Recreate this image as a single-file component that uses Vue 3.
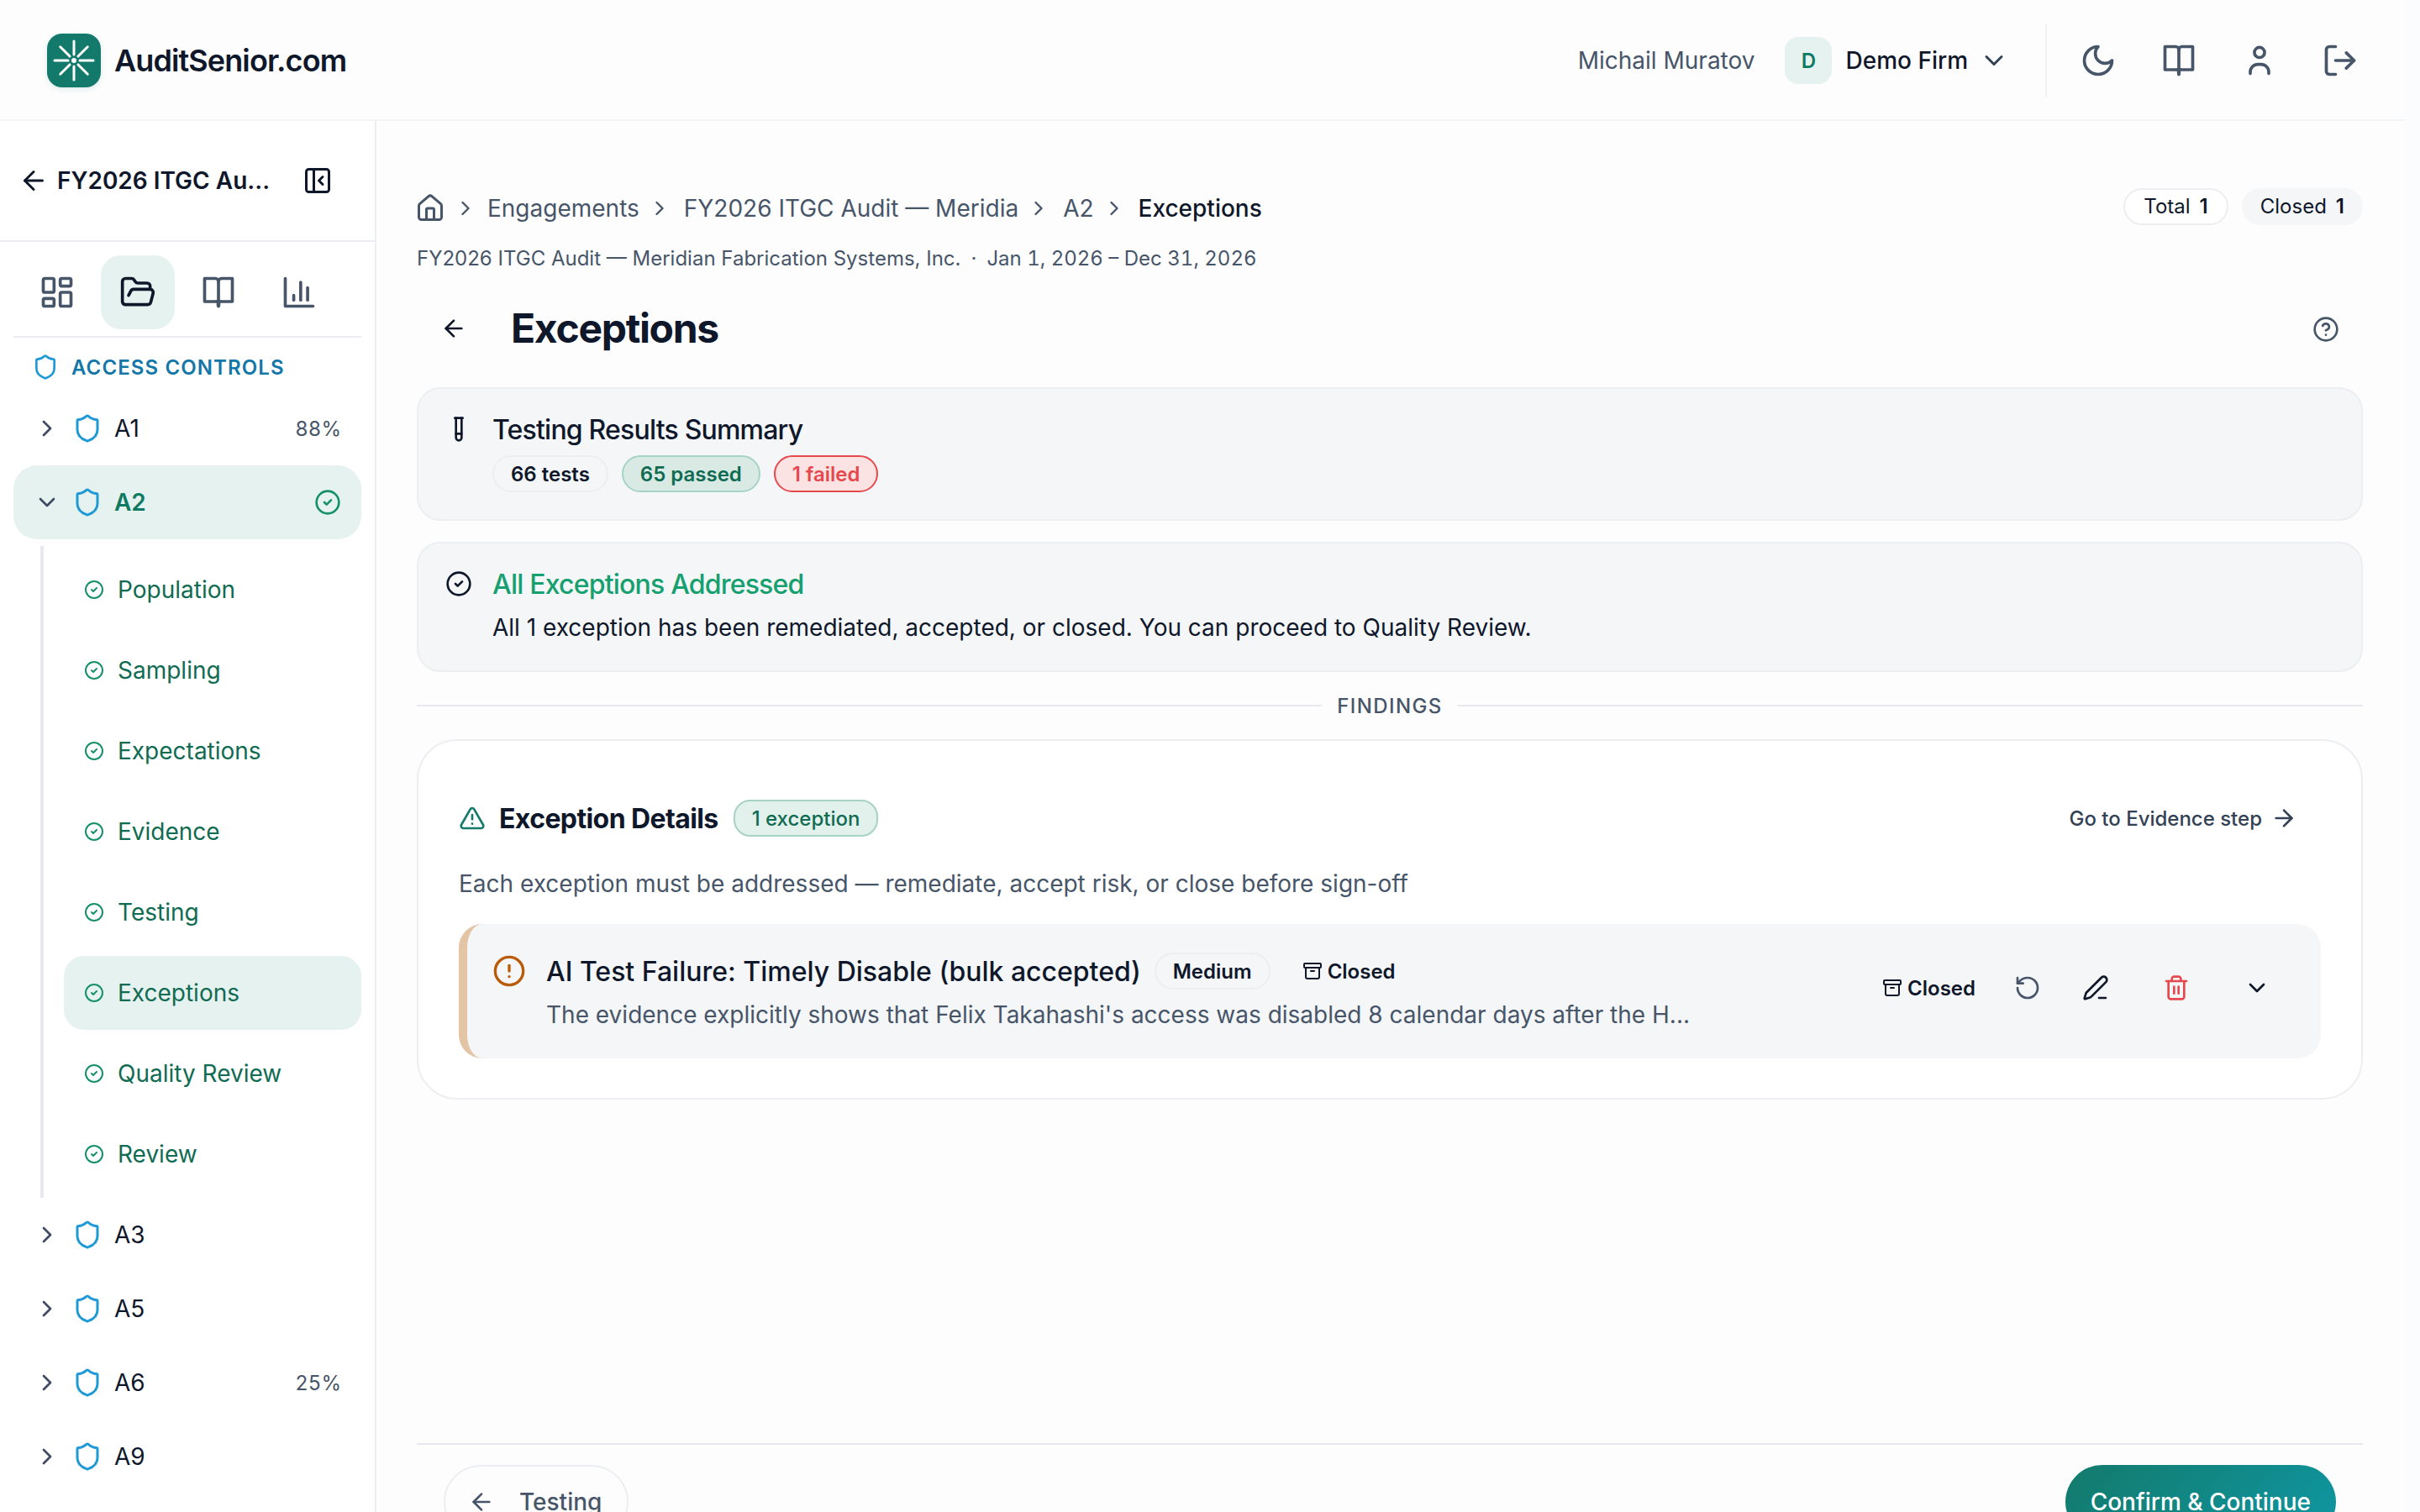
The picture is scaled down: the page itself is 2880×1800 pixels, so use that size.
<script setup>
import { h } from 'vue'

const icons = {
  arrowLeft: '<path d="m12 19-7-7 7-7"/><path d="M19 12H5"/>',
  arrowRight: '<path d="M5 12h14"/><path d="m12 5 7 7-7 7"/>',
  panel: '<rect x="3" y="3" width="18" height="18" rx="2"/><path d="M9 3v18"/><path d="m16 15-3-3 3-3"/>',
  dash: '<rect x="3" y="3" width="7" height="9" rx="1"/><rect x="14" y="3" width="7" height="5" rx="1"/><rect x="14" y="12" width="7" height="9" rx="1"/><rect x="3" y="16" width="7" height="5" rx="1"/>',
  folder: '<path d="m6 14 1.5-2.9A2 2 0 0 1 9.24 10H20a2 2 0 0 1 1.94 2.5l-1.54 6a2 2 0 0 1-1.95 1.5H4a2 2 0 0 1-2-2V5a2 2 0 0 1 2-2h3.9a2 2 0 0 1 1.69.9l.81 1.2a2 2 0 0 0 1.67.9H18a2 2 0 0 1 2 2v2"/>',
  book: '<path d="M12 5v16"/><path d="M3 3h7a2 2 0 0 1 2 2 2 2 0 0 1 2-2h7v15h-7a2 2 0 0 0-2 3 2 2 0 0 0-2-3H3z"/>',
  chart: '<path d="M3 3v18h18"/><path d="M17.5 17V9"/><path d="M13 17V5.5"/><path d="M8.5 17v-3"/>',
  shield: '<path d="M20 13c0 5-3.5 7.5-7.66 8.95a1 1 0 0 1-.67-.01C7.5 20.5 4 18 4 13V6a1 1 0 0 1 1-1c2 0 4.5-1.2 6.24-2.72a1.17 1.17 0 0 1 1.52 0C14.51 3.81 17 5 19 5a1 1 0 0 1 1 1z"/>',
  check: '<circle cx="12" cy="12" r="10"/><path d="m9 12 2 2 4-4"/>',
  right: '<path d="m9 18 6-6-6-6"/>',
  down: '<path d="m6 9 6 6 6-6"/>',
  moon: '<path d="M12 3a6 6 0 0 0 9 9 9 9 0 1 1-9-9Z"/>',
  user: '<circle cx="12" cy="6.8" r="3.3"/><path d="M6 20.5v-1a5 5 0 0 1 5-5h2a5 5 0 0 1 5 5v1"/>',
  logout: '<path d="M9 21H5a2 2 0 0 1-2-2V5a2 2 0 0 1 2-2h4"/><path d="m16 17 5-5-5-5"/><path d="M21 12H9"/>',
  home: '<path d="M15 21v-8a1 1 0 0 0-1-1h-4a1 1 0 0 0-1 1v8"/><path d="M3 10a2 2 0 0 1 .709-1.528l7-5.999a2 2 0 0 1 2.582 0l7 5.999A2 2 0 0 1 21 10v9a2 2 0 0 1-2 2H5a2 2 0 0 1-2-2z"/>',
  help: '<circle cx="12" cy="12" r="10"/><path d="M9.09 9a3 3 0 0 1 5.83 1c0 2-3 3-3 3"/><path d="M12 17h.01"/>',
  tube: '<path d="M14.5 2v17.5c0 1.4-1.1 2.5-2.5 2.5s-2.5-1.1-2.5-2.5V2"/><path d="M8.5 2h7"/><path d="M14.5 16h-5"/>',
  triangle: '<path d="m21.73 18-8-14a2 2 0 0 0-3.48 0l-8 14A2 2 0 0 0 4 21h16a2 2 0 0 0 1.73-3"/><path d="M12 9v4"/><path d="M12 17h.01"/>',
  alert: '<circle cx="12" cy="12" r="10"/><path d="M12 8v4"/><path d="M12 16h.01"/>',
  archive: '<rect x="2" y="3" width="20" height="5" rx="1"/><path d="M4 8v11a2 2 0 0 0 2 2h12a2 2 0 0 0 2-2V8"/><path d="M10 12h4"/>',
  rotate: '<path d="M3 12a9 9 0 1 0 9-9 9.75 9.75 0 0 0-6.74 2.74L3 8"/><path d="M3 3v5h5"/>',
  pen: '<path d="M15 21h6"/><path d="M21.174 6.812a1 1 0 0 0-3.986-3.987L3.842 16.174a2 2 0 0 0-.5.83l-1.321 4.352a.5.5 0 0 0 .623.622l4.353-1.32a2 2 0 0 0 .83-.497z"/>',
  trash: '<path d="M3 6h18"/><path d="M19 6v14c0 1-1 2-2 2H7c-1 0-2-1-2-2V6"/><path d="M8 6V4c0-1 1-2 2-2h4c1 0 2 1 2 2v2"/><path d="M10 11v6"/><path d="M14 11v6"/>'
}

const Ic = (props) =>
  h('svg', {
    width: props.size || 32,
    height: props.size || 32,
    viewBox: '0 0 24 24',
    fill: 'none',
    stroke: 'currentColor',
    'stroke-width': props.sw || 2,
    'stroke-linecap': 'round',
    'stroke-linejoin': 'round',
    innerHTML: icons[props.name]
  })
Ic.props = ['name', 'size', 'sw']

const steps = ['Population', 'Sampling', 'Expectations', 'Evidence', 'Testing', 'Exceptions', 'Quality Review', 'Review']
const after = [
  { id: 'A3', pct: '' },
  { id: 'A5', pct: '' },
  { id: 'A6', pct: '25%' },
  { id: 'A9', pct: '' }
]
const crumbs = ['Engagements', 'FY2026 ITGC Audit — Meridia', 'A2']
const spokes = [0, 45, 90, 135]
</script>

<template>
  <div class="page">
    <header class="top">
      <div class="brand">
        <span class="logo">
          <svg width="64" height="64" viewBox="0 0 64 64">
            <g stroke="#fff" stroke-width="3" stroke-linecap="round">
              <g v-for="a in spokes" :key="a" :transform="`rotate(${a} 32 32)`">
                <path d="M32 9v16M32 39v16" />
              </g>
            </g>
            <circle cx="32" cy="32" r="3" fill="#fff" />
          </svg>
        </span>
        <span class="brand-name">AuditSenior.com</span>
      </div>
      <div class="top-right">
        <span class="user-name">Michail Muratov</span>
        <span class="avatar">D</span>
        <span class="firm">Demo Firm</span>
        <Ic class="firm-chev" name="down" :size="36" />
        <span class="vsep"></span>
        <div class="top-icons">
          <Ic name="moon" :size="44" />
          <Ic name="book" :size="44" />
          <Ic name="user" :size="44" />
          <Ic name="logout" :size="44" />
        </div>
      </div>
    </header>

    <div class="body">
      <aside class="side">
        <div class="side-head">
          <Ic class="dark" name="arrowLeft" :size="36" />
          <span class="side-title">FY2026 ITGC Au...</span>
          <Ic class="dark panel" name="panel" :size="36" />
        </div>
        <div class="tabs">
          <span class="tab"><Ic name="dash" :size="44" /></span>
          <span class="tab on"><Ic name="folder" :size="44" /></span>
          <span class="tab"><Ic name="book" :size="44" /></span>
          <span class="tab"><Ic name="chart" :size="44" /></span>
        </div>
        <div class="group-label">
          <Ic class="blue" name="shield" :size="32" />
          <span>ACCESS CONTROLS</span>
        </div>

        <div class="row">
          <Ic class="chev" name="right" :size="32" />
          <Ic class="blue" name="shield" :size="36" />
          <span class="row-id">A1</span>
          <span class="pct">88%</span>
        </div>
        <div class="row active">
          <Ic class="chev" name="down" :size="32" />
          <Ic class="blue" name="shield" :size="36" />
          <span class="row-id">A2</span>
          <Ic class="okc" name="check" :size="32" />
        </div>
        <div class="steps">
          <div v-for="s in steps" :key="s" class="step" :class="{ cur: s === 'Exceptions' }">
            <Ic class="okc" name="check" :size="24" />
            <span>{{ s }}</span>
          </div>
        </div>
        <div v-for="r in after" :key="r.id" class="row">
          <Ic class="chev" name="right" :size="32" />
          <Ic class="blue" name="shield" :size="36" />
          <span class="row-id">{{ r.id }}</span>
          <span class="pct">{{ r.pct }}</span>
        </div>
      </aside>

      <main class="main">
        <div class="crumb-row">
          <nav class="crumbs">
            <Ic class="slate home" name="home" :size="36" />
            <template v-for="c in crumbs" :key="c">
              <Ic class="slate sep" name="right" :size="28" />
              <span>{{ c }}</span>
            </template>
            <Ic class="slate sep" name="right" :size="28" />
            <span class="last">Exceptions</span>
          </nav>
          <div class="totals">
            <span class="tot outl">Total <b>1</b></span>
            <span class="tot fill">Closed <b>1</b></span>
          </div>
        </div>
        <p class="subline">FY2026 ITGC Audit — Meridian Fabrication Systems, Inc.<span class="dot">·</span><span class="dates">Jan 1, 2026 – Dec 31, 2026</span></p>

        <div class="title-row">
          <Ic class="dark" name="arrowLeft" :size="32" />
          <h1>Exceptions</h1>
          <Ic class="slate help" name="help" :size="32" />
        </div>

        <section class="panel-card sum">
          <Ic class="dark lead" name="tube" :size="32" />
          <div>
            <h2>Testing Results Summary</h2>
            <div class="pills">
              <span class="pill plain">66 tests</span>
              <span class="pill green">65 passed</span>
              <span class="pill red">1 failed</span>
            </div>
          </div>
        </section>

        <section class="panel-card addr">
          <Ic class="dark lead" name="check" :size="32" />
          <div>
            <h2 class="ok">All Exceptions Addressed</h2>
            <p>All 1 exception has been remediated, accepted, or closed. You can proceed to Quality Review.</p>
          </div>
        </section>

        <div class="divider"><span>FINDINGS</span></div>

        <section class="details">
          <div class="det-head">
            <Ic class="teal" name="triangle" :size="32" />
            <h3>Exception Details</h3>
            <span class="count">1 exception</span>
            <span class="goto">Go to Evidence step <Ic name="arrowRight" :size="32" /></span>
          </div>
          <p class="det-sub">Each exception must be addressed — remediate, accept risk, or close before sign-off</p>
          <div class="exc">
            <Ic class="amber" name="alert" :size="40" />
            <div class="exc-text">
              <div class="exc-title">
                <h4>AI Test Failure: Timely Disable (bulk accepted)</h4>
                <span class="sev">Medium</span>
                <span class="state"><Ic name="archive" :size="24" />Closed</span>
              </div>
              <p>The evidence explicitly shows that Felix Takahashi's access was disabled 8 calendar days after the H...</p>
            </div>
            <div class="exc-actions">
              <span class="state"><Ic name="archive" :size="24" />Closed</span>
              <Ic class="slate a-rot" name="rotate" :size="32" />
              <Ic class="dark a-pen" name="pen" :size="32" />
              <Ic class="redc a-far" name="trash" :size="32" />
              <Ic class="dark a-far" name="down" :size="32" />
            </div>
          </div>
        </section>

        <div class="spacer"></div>
        <footer class="foot">
          <span class="btn-back"><Ic name="arrowLeft" :size="32" />Testing</span>
          <span class="btn-next">Confirm &amp; Continue</span>
        </footer>
      </main>
    </div>
  </div>
</template>

<style>
html, body { margin: 0; height: 100%; overflow: hidden; background: #fbfcfe; }
</style>

<style scoped>
.page {
  width: 2862px;
  height: 1800px;
  display: flex;
  flex-direction: column;
  overflow: hidden;
  font-family: Inter, "Noto Sans", sans-serif;
  color: #0f172a;
  background: #fdfdfd;
}
h1, h2, h3, h4, p { margin: 0; font-weight: inherit; }
svg { flex: none; display: block; }
.dark { color: #0f172a; }
.slate { color: #475569; }
.blue { color: #1f9ad6; }
.okc { color: #16906a; }
.teal { color: #137a6b; }
.amber { color: #b85c0a; }
.redc { color: #e5484d; }

.top {
  height: 144px;
  flex: none;
  box-sizing: border-box;
  border-bottom: 2px solid #f3f4f6;
  display: flex;
  align-items: center;
  justify-content: space-between;
  padding: 2px 55px 0 56px;
}
.brand { display: flex; align-items: center; gap: 16px; }
.logo {
  width: 64px; height: 64px; border-radius: 18px;
  background: #137a6b;
  box-shadow: 0 2px 6px rgba(19, 122, 107, .15);
}
.brand-name { font-size: 36px; font-weight: 600; letter-spacing: -0.9px; }
.top-right { display: flex; align-items: center; height: 88px; }
.user-name { font-size: 28px; color: #475569; margin-right: 36px; }
.avatar {
  width: 56px; height: 56px; border-radius: 16px;
  background: #e6f2ef; color: #0f7a62;
  display: flex; align-items: center; justify-content: center;
  font-size: 24px; font-weight: 600; margin-right: 16px;
}
.firm { font-size: 28px; font-weight: 500; }
.firm-chev { margin-left: 13px; color: #334155; }
.vsep { width: 2px; height: 88px; background: #f1f2f4; margin: 0 39px 0 43px; }
.top-icons { display: flex; gap: 52px; color: #475569; }

.body { flex: 1; min-height: 0; display: flex; }
.side {
  width: 448px; flex: none; box-sizing: border-box;
  background: #fff;
  border-right: 2px solid #eceef1;
}
.side-head {
  height: 144px; box-sizing: border-box;
  border-bottom: 2px solid #eceef1;
  display: flex; align-items: center;
  padding-left: 22px;
}
.side-title { font-size: 28px; font-weight: 600; margin-left: 10px; white-space: nowrap; flex: 1; }
.panel { margin-right: 50px; }
.tabs {
  margin: 16px 16px 0; padding-bottom: 8px;
  border-bottom: 2px solid #eceef1;
  display: flex; gap: 8px; padding-left: 8px;
}
.tab {
  width: 88px; height: 88px; border-radius: 24px;
  display: flex; align-items: center; justify-content: center;
  color: #475569;
}
.tab.on { background: #e6f2ef; color: #0f172a; }
.group-label {
  display: flex; align-items: center; gap: 15px;
  height: 36px; margin-top: 17px; padding-left: 38px;
  font-size: 24px; font-weight: 600; letter-spacing: 1.1px; color: #1377a8;
}
.row {
  height: 88px; display: flex; align-items: center;
  margin: 0 16px; padding: 0 24px 0 24px;
  border-radius: 28px;
}
.group-label + .row { margin-top: 11px; }
.chev { color: #3f4a63; margin-right: 14px; }
.row-id { font-size: 28px; margin-left: 14px; flex: 1; }
.pct { font-size: 24px; color: #475569; font-variant-numeric: tabular-nums; }
.row.active { background: #e6f2ef; }
.row.active .row-id { color: #0f7a62; font-weight: 600; }
.steps {
  margin: 8px 0 0 48px;
  padding-left: 24px;
  border-left: 4px solid #e7e9ee;
  height: 776px; box-sizing: border-box;
  display: flow-root;
}
.step {
  height: 88px; margin: 8px 16px 0 0;
  display: flex; align-items: center; gap: 16px;
  padding-left: 24px; border-radius: 24px;
  font-size: 28px; color: #0f6b52;
}
.step.cur { background: #e6f2ef; }

.main {
  flex: 1; min-width: 0; box-sizing: border-box;
  padding: 84px 50px 0 48px;
  display: flex; flex-direction: column;
}
.crumb-row { display: flex; align-items: center; justify-content: space-between; height: 40px; }
.crumbs { display: flex; align-items: center; font-size: 28px; color: #475569; }
.crumbs span { white-space: nowrap; }
.home { margin-left: -2px; }
.sep { margin: 0 15px 0 10px; }
.home + .sep { margin-right: 12px; }
.last { color: #0f172a; font-weight: 500; }
.totals { display: flex; gap: 16px; margin-bottom: 5px; }
.tot {
  height: 44px; box-sizing: border-box; padding: 0 22px; border-radius: 22px;
  display: flex; align-items: center; gap: 11px;
  font-size: 24px;
}
.tot b { font-weight: 600; }
.outl { border: 2px solid #eceef1; background: #fff; }
.fill { background: #f4f6f8; }
.subline { margin-top: 21px; font-size: 24px; line-height: 38px; color: #475569; white-space: nowrap; }
.dot { margin: 0 12px; }
.dates { font-variant-numeric: tabular-nums; }
.title-row { display: flex; align-items: center; height: 68px; margin-top: 30px; padding: 0 28px 0 28px; }
.title-row h1 { font-size: 48px; font-weight: 700; letter-spacing: -1.3px; margin: -2px 0 0 52px; flex: 1; }
.help { margin-top: 2px; }

.panel-card {
  box-sizing: border-box;
  background: #f4f6f8;
  border: 2px solid #eceef1;
  border-radius: 28px;
  display: flex; gap: 24px;
  padding: 25px 32px;
}
.sum { height: 159px; margin-top: 36px; }
.addr { height: 155px; margin-top: 25px; }
.lead { margin-top: 7px; }
.panel-card h2 { font-size: 32px; letter-spacing: -0.8px; font-weight: 500; line-height: 48px; }
.panel-card h2.ok { color: #16a06f; }
.panel-card p { font-size: 28px; line-height: 44px; margin-top: 5px; }
.pills { display: flex; gap: 16px; margin-top: 6px; }
.pill {
  height: 44px; box-sizing: border-box; border-radius: 22px; padding: 0 20px;
  display: flex; align-items: center;
  font-size: 24px; font-weight: 600; border: 2px solid transparent;
}
.plain { border-color: #eceef1; }
.green { background: #d8eae3; border-color: #a6d3c4; color: #0f6b52; }
.red { background: #fbe3e3; border-color: #e5484d; color: #e5484d; }

.divider { display: flex; align-items: center; gap: 18px; margin-top: 20px; height: 40px; font-size: 24px; font-weight: 500; letter-spacing: 1.4px; color: #475569; }
.divider::before, .divider::after { content: ""; flex: 1; height: 2px; background: #e7e9ee; }

.details {
  box-sizing: border-box; height: 429px; margin-top: 20px;
  background: #fff; border: 2px solid #eceef1; border-radius: 48px;
  padding: 70px 48px 0;
}
.det-head { display: flex; align-items: center; height: 44px; }
.det-head h3 { font-size: 32px; font-weight: 700; letter-spacing: -0.6px; margin-left: 16px; }
.count {
  height: 44px; box-sizing: border-box; border-radius: 20px; margin-left: 18px; padding: 0 20px;
  display: flex; align-items: center;
  font-size: 24px; font-weight: 500; color: #0f6b52;
  background: #e3f1ec; border: 2px solid #a6d3c4;
}
.goto { margin-left: auto; margin-right: 28px; display: flex; align-items: center; gap: 10px; font-size: 24px; font-weight: 500; color: #334155; }
.det-sub { margin-top: 34px; font-size: 28px; line-height: 44px; color: #475569; }
.exc {
  box-sizing: border-box; height: 160px; margin-top: 26px;
  background: #f4f6f8; border-radius: 28px;
  border-left: 10px solid #e3c5a6;
  display: flex; align-items: flex-start; padding: 36px 60px 0 30px;
}
.exc-text { margin: -2px 0 0 24px; flex: 1; min-width: 0; }
.exc-title { display: flex; align-items: center; }
.exc-title h4 { font-size: 32px; font-weight: 500; }
.sev {
  margin-left: 16px; height: 44px; box-sizing: border-box; padding: 0 20px; border-radius: 22px;
  display: flex; align-items: center;
  font-size: 24px; font-weight: 600; border: 2px solid #eceef1;
}
.state { display: flex; align-items: center; gap: 6px; font-size: 24px; font-weight: 600; }
.exc-title .state { margin-left: 38px; }
.exc-text p { font-size: 28px; line-height: 44px; color: #475569; margin-top: 8px; }
.exc-actions { display: flex; align-items: center; height: 40px; margin-top: 20px; }
.a-rot { margin-left: 46px; }
.a-pen { margin-left: 49px; }
.a-far { margin-left: 64px; }

.spacer { flex: 1; }
.foot {
  flex: none; height: 82px; box-sizing: border-box; border-top: 2px solid #e7e9ee;
  padding: 24px 32px 0;
  display: flex; justify-content: space-between; align-items: flex-start;
}
.btn-back {
  height: 88px; flex: none; box-sizing: border-box; padding: 0 30px 0 27px; border-radius: 44px;
  border: 2px solid #eceef1; color: #475569;
  display: flex; align-items: center; gap: 29px; font-size: 28px; font-weight: 500;
}
.btn-next {
  height: 88px; flex: none; box-sizing: border-box; padding: 0 30px; border-radius: 44px;
  background: linear-gradient(135deg, #137a6b, #0f97a3); color: #fff;
  display: flex; align-items: center; font-size: 28px; font-weight: 500;
}
</style>
